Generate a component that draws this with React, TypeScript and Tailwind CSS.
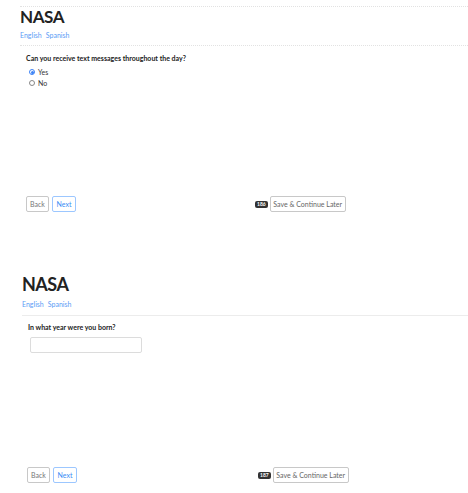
import React from "react";

const font = { fontFamily: 'Lato, "Open Sans", Arial, sans-serif' };

function Footer({ num, leftW }: { num: string; leftW: string }) {
  return (
    <div className="flex items-center">
      <div className={`flex gap-[3px] ${leftW}`}>
        <div className="h-[16px] w-[23px] justify-center flex items-center border border-[#c8c8c8] rounded-[2px] text-[7px] text-[#777]">Back</div>
        <div className="h-[16px] w-[24px] justify-center flex items-center border border-[#9cc7ff] rounded-[2px] text-[7px] text-[#3b8cf5]">Next</div>
      </div>
      <div className="flex items-center gap-[2px]">
        <div className="h-[7px] px-[2px] flex items-center rounded-[2px] bg-[#333] text-white text-[5px] font-bold leading-none">{num}</div>
        <div className="h-[16px] w-[76px] justify-center flex items-center border border-[#c8c8c8] rounded-[2px] text-[7px] text-[#666]">Save &amp; Continue Later</div>
      </div>
    </div>
  );
}

export default function App() {
  return (
    <div className="w-[468px] h-[493px] bg-white overflow-hidden" style={font}>
      {/* Top panel */}
      <div className="h-[262px] pl-[20px]">
        <div className="mt-[6px] border-t border-dotted border-[#e2e2e2]" />
        <div className="text-[17px] leading-[20px] font-bold text-[#222] tracking-[-0.4px]">NASA</div>
        <div className="flex gap-[4px] text-[7px] leading-[10px] text-[#5b9cf5] mt-[3px]">
          <span>English</span>
          <span>Spanish</span>
        </div>
        <div className="mt-[5px] border-t border-dotted border-[#e2e2e2]" />
        <div className="pl-[6px] mt-[7px]">
          <div className="text-[7px] font-bold text-[#222] leading-[10px]">Can you receive text messages throughout the day?</div>
          <div className="pl-[3px] mt-[4px] flex flex-col gap-[1px] text-[7px] text-[#333] leading-[10px]">
            <label className="flex items-center gap-[3px]">
              <span className="w-[6px] h-[6px] rounded-full border border-[#3b82f6] flex items-center justify-center bg-white">
                <span className="w-[3px] h-[3px] rounded-full bg-[#3b82f6]" />
              </span>
              Yes
            </label>
            <label className="flex items-center gap-[3px]">
              <span className="w-[6px] h-[6px] rounded-full border border-[#888] bg-white" />
              No
            </label>
          </div>
          <div className="mt-[108px]">
            <Footer num="186" leftW="w-[229px]" />
          </div>
        </div>
      </div>
      {/* Bottom panel */}
      <div className="pl-[22px] pt-[6px]">
        <div className="text-[18px] leading-[21px] font-bold text-[#222] tracking-[-0.5px]">NASA</div>
        <div className="flex gap-[4px] text-[7px] leading-[10px] text-[#5b9cf5] mt-[4px]">
          <span>English</span>
          <span>Spanish</span>
        </div>
        <div className="mt-[6px] border-t border-[#ececec]" />
        <div className="pl-[6px] mt-[6px]">
          <div className="text-[7px] font-bold text-[#222] leading-[10px]">In what year were you born?</div>
          <div className="ml-[2px] mt-[5px] w-[112px] h-[16px] border border-[#dcdcdc] rounded-[2px]" />
          <div className="mt-[114px] -ml-[1px]">
            <Footer num="187" leftW="w-[231px]" />
          </div>
        </div>
      </div>
    </div>
  );
}
